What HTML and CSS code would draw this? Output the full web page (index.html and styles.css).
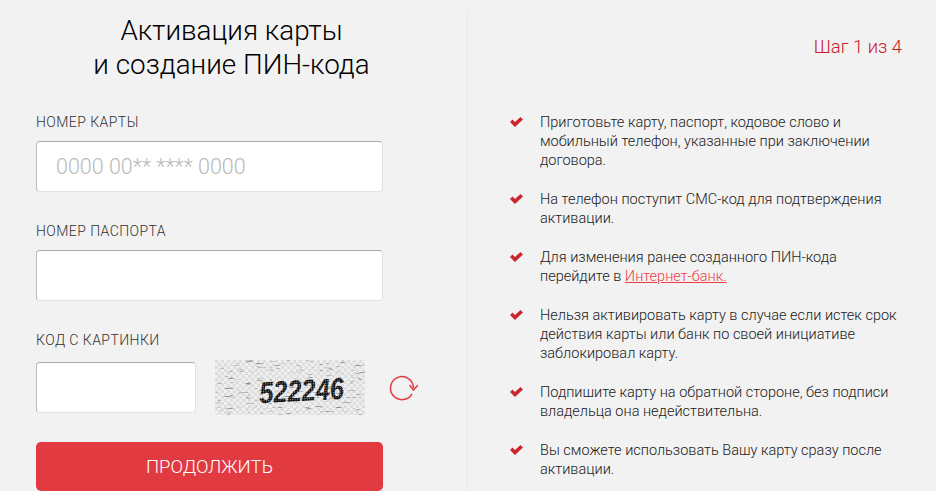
FILE: index.html
```html
<!DOCTYPE html>
<html lang="ru">
<head>
  <meta charset="UTF-8" />
  <title>Активация карты</title>
  <link rel="stylesheet" href="styles.css">
</head>
<body>
  <div class="page">
    <!-- form column -->
    <div class="form-col">
      <h1>Активация карты<br>и создание ПИН-кода</h1>

      <div class="form-group">
        <label for="cardNumber">Номер карты</label>
        <input id="cardNumber" type="text" placeholder="0000 00** **** 0000">
      </div>

      <div class="form-group">
        <label for="passport">Номер паспорта</label>
        <input id="passport" type="text">
      </div>

      <div class="form-group form-group-last">
        <label for="captcha">Код с картинки</label>
        <div class="captcha-row">
          <input id="captcha" class="captcha-input" type="text">
          <svg class="captcha-img" width="150" height="55" viewBox="0 0 150 55">
            <defs>
              <pattern id="checks" width="6" height="6" patternUnits="userSpaceOnUse">
                <rect width="6" height="6" fill="#efefef"/>
                <rect width="3" height="3" fill="#dedede"/>
                <rect x="3" y="3" width="3" height="3" fill="#dedede"/>
              </pattern>
              <pattern id="dots" width="2.4" height="2.4" patternUnits="userSpaceOnUse">
                <rect width="2.4" height="2.4" fill="#111"/>
                <rect width="1" height="1" fill="#bbb"/>
              </pattern>
              <filter id="grain">
                <feTurbulence type="fractalNoise" baseFrequency="0.1 0.8" numOctaves="2" seed="4"/>
                <feColorMatrix type="matrix" values="0 0 0 0 0.25  0 0 0 0 0.25  0 0 0 0 0.25  5 0 0 0 -3.1"/>
              </filter>
            </defs>
            <rect width="150" height="55" fill="url(#checks)"/>
            <rect width="150" height="55" filter="url(#grain)"/>
            <text class="captcha-text" x="44" y="41" textLength="85" lengthAdjust="spacingAndGlyphs" transform="rotate(-3 86 30)">522246</text>
          </svg>
          <button class="refresh" type="button" aria-label="Обновить">
            <svg width="30" height="30" viewBox="0 0 30 30" fill="none" stroke="#e23a41" stroke-width="1.5">
              <path d="M24 20.8A11.5 11.5 0 1 1 25.5 15"/>
              <path d="M21.5 12l4 5 4.5-5"/>
            </svg>
          </button>
        </div>
      </div>

      <button class="submit" type="button">Продолжить</button>
    </div>

    <!-- info column -->
    <div class="info-col">
      <div class="step">Шаг 1 из 4</div>
      <ul class="notes">
        <li>Приготовьте карту, паспорт, кодовое слово и мобильный телефон, указанные при заключении договора.</li>
        <li>На телефон поступит СМС-код для подтверждения активации.</li>
        <li>Для изменения ранее созданного ПИН-кода<br>перейдите в <a href="#">Интернет-банк.</a></li>
        <li>Нельзя активировать карту в случае если истек срок действия карты или банк по своей инициативе заблокировал карту.</li>
        <li>Подпишите карту на обратной стороне, без подписи владельца она недействительна.</li>
        <li>Вы сможете использовать Вашу карту сразу после активации.</li>
      </ul>
    </div>
  </div>
</body>
</html>
```

FILE: styles.css
```css
* { box-sizing: border-box; margin: 0; padding: 0; }

html, body {
  height: 491px;
  overflow: hidden;
}
body {
  background-color: #f2f2f2;
  color: #111;
  font-family: Roboto, "Liberation Sans", sans-serif;
  font-weight: 300;
}

.page {
  display: flex;
  height: 491px;
}

/* form column */
.form-col {
  width: 467px;
  padding: 14px 84px 0 36px;
}
h1 {
  margin: 0 -44px 31px 0;
  font-size: 27.8px;
  font-weight: 300;
  line-height: 34px;
  text-align: center;
  color: #000;
}
.form-group { margin-bottom: 30px; }
.form-group-last { margin-bottom: 27px; }
.form-group label {
  display: block;
  font-size: 14px;
  font-weight: 300;
  line-height: 19px;
  letter-spacing: .45px;
  text-transform: uppercase;
  color: #333;
  margin-bottom: 9px;
}
input {
  display: block;
  width: 100%;
  height: 51px;
  padding: 0 19px;
  background: #fff;
  border: 1px solid #e2e2e2;
  border-top: 1px solid #aaa;
  border-left: 1px solid #bbb;
  border-radius: 4px;
  outline: none;
  font-family: inherit;
  font-size: 21.5px;
  font-weight: 300;
}
input::placeholder { color: #b9b9b9; opacity: 1; }

.captcha-row {
  display: flex;
  align-items: center;
  margin-top: 10px;
}
.captcha-input { width: 160px; flex: none; }
.captcha-img { margin-left: 19px; flex: none; }
.captcha-text {
  font-family: "Liberation Sans", sans-serif;
  font-size: 30px;
  font-weight: 700;
  font-style: italic;
  fill: url(#dots);
}
.refresh {
  display: flex;
  margin-left: 23px;
  background: none;
  border: none;
}
.submit {
  display: block;
  width: 347px;
  height: 49px;
  background-color: #e23a41;
  border: none;
  border-radius: 5px;
  color: #fff;
  font-family: inherit;
  font-size: 18.5px;
  font-weight: 300;
  text-transform: uppercase;
}

/* info column */
.info-col {
  flex: 1;
  margin-top: 12px;
  padding: 0 34px 0 42px;
  border-left: 1px solid #e8e8e8;
}
.step {
  margin-top: 23px;
  text-align: right;
  font-size: 18.4px;
  line-height: 24px;
  color: #c8201f;
}
.notes {
  list-style: none;
  margin-top: 54px;
}
.notes li {
  position: relative;
  padding-left: 30px;
  margin-bottom: 20px;
  font-size: 14.5px;
  line-height: 19px;
  color: #1a1a1a;
}
.notes li::before {
  content: "";
  position: absolute;
  left: 0;
  top: 4px;
  width: 13px;
  height: 10px;
  background-color: #c8282d;
  clip-path: polygon(0 50%, 19% 25%, 38% 50%, 81% 0, 100% 25%, 38% 100%);
}
.notes a { color: #ee3b45; }
```
